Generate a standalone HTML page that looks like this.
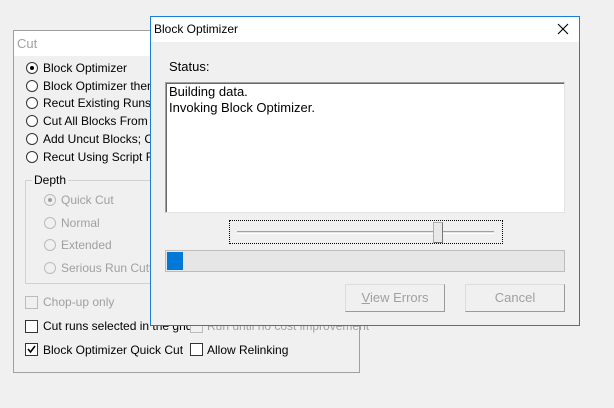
<!DOCTYPE html>
<html><head><meta charset="utf-8"><style>
*{margin:0;padding:0;box-sizing:border-box}
body{width:614px;height:408px;background:#f0f0f0;position:relative;overflow:hidden;font-family:"Liberation Sans",sans-serif;font-size:12px;color:#000}
.a{position:absolute;white-space:nowrap}
.rad{position:absolute;width:12px;height:12px;border-radius:50%;border:1px solid #333;background:#fff}
.rad.d{border-color:#bbb;background:#f0f0f0}
.dot{position:absolute;left:3px;top:3px;width:4px;height:4px;border-radius:50%;background:#000}
.cb{position:absolute;width:13px;height:13px;border:1px solid #333;background:#fff}
.cb.d{border-color:#bbb;background:#f0f0f0}
.g{color:#a0a0a0}
</style></head><body>
<!-- background window -->
<div class="a" style="left:13px;top:30px;width:347px;height:343px;border:1px solid #a0a0a0;background:#f0f0f0"></div>
<div class="a" style="left:14px;top:31px;width:345px;height:25px;background:#fff"></div>
<div class="a g" style="left:17px;top:36px;font-size:13px">Cut</div>

<div class="rad" style="left:26px;top:62px"><div class="dot"></div></div><div class="a" style="left:43px;top:61px">Block Optimizer</div>
<div class="rad" style="left:26px;top:80px"></div><div class="a" style="left:43px;top:79px">Block Optimizer then Run</div>
<div class="rad" style="left:26px;top:97px"></div><div class="a" style="left:43px;top:96px">Recut Existing Runs</div>
<div class="rad" style="left:26px;top:115px"></div><div class="a" style="left:43px;top:114px">Cut All Blocks From Scratch</div>
<div class="rad" style="left:26px;top:133px"></div><div class="a" style="left:43px;top:132px">Add Uncut Blocks; Cut</div>
<div class="rad" style="left:26px;top:151px"></div><div class="a" style="left:43px;top:150px">Recut Using Script File</div>

<div class="a" style="left:25px;top:180px;width:330px;height:104px;border:1px solid #d0d0d0"></div>
<div class="a" style="left:32px;top:173px;background:#f0f0f0;padding:0 2px">Depth</div>
<div class="rad d" style="left:44px;top:194px"><div class="dot" style="background:#a0a0a0"></div></div><div class="a g" style="left:61px;top:193px">Quick Cut</div>
<div class="rad d" style="left:44px;top:217px"></div><div class="a g" style="left:61px;top:216px">Normal</div>
<div class="rad d" style="left:44px;top:239px"></div><div class="a g" style="left:61px;top:238px">Extended</div>
<div class="rad d" style="left:44px;top:262px"></div><div class="a g" style="left:61px;top:261px">Serious Run Cutting</div>

<div class="cb d" style="left:25px;top:296px"></div><div class="a g" style="left:43px;top:295px">Chop-up only</div>
<div class="cb" style="left:25px;top:320px"></div><div class="a" style="left:43px;top:319px">Cut runs selected in the grid</div>
<div class="cb d" style="left:190px;top:320px"></div><div class="a g" style="left:207px;top:319px">Run until no cost improvement</div>
<div class="cb" style="left:25px;top:343px"><svg width="11" height="11" style="position:absolute;left:0;top:0"><path d="M2 5 L4.5 8 L9 2" stroke="#000" stroke-width="1.6" fill="none"/></svg></div><div class="a" style="left:43px;top:343px">Block Optimizer Quick Cut</div>
<div class="cb" style="left:190px;top:343px"></div><div class="a" style="left:207px;top:343px">Allow Relinking</div>

<!-- dialog -->
<div class="a" style="left:150px;top:16px;width:430px;height:310px;border:1px solid #1a7fd4;background:#f0f0f0"></div>
<div class="a" style="left:151px;top:17px;width:428px;height:25px;background:#fff"></div>
<div class="a" style="left:154px;top:22px">Block Optimizer</div>
<svg class="a" style="left:557px;top:23px" width="12" height="12"><path d="M1 1L11 11M11 1L1 11" stroke="#000" stroke-width="1.1"/></svg>
<div class="a" style="left:169px;top:59px;font-size:13px">Status:</div>
<div class="a" style="left:165px;top:82px;width:400px;height:131px;background:#fff;border:1px solid #a0a0a0;border-right-color:#e3e3e3;border-bottom-color:#e3e3e3;box-shadow:inset 1px 1px 0 #696969"></div>
<div class="a" style="left:169px;top:84px;font-size:13px;line-height:16px">Building data.<br>Invoking Block Optimizer.</div>
<div class="a" style="left:229px;top:220px;width:274px;height:24px;border:1px dotted #000"></div>
<div class="a" style="left:237px;top:231px;width:257px;height:3px;border-top:1px solid #a0a0a0;border-bottom:1px solid #fff;background:#e3e3e3"></div>
<div class="a" style="left:433px;top:222px;width:10px;height:21px;background:#e8e8e8;border:1px solid #b0b0b0;border-right-color:#777;border-bottom-color:#777"></div>
<div class="a" style="left:165px;top:250px;width:400px;height:22px;background:#e6e6e6;border:1px solid #bcbcbc"></div>
<div class="a" style="left:167px;top:252px;width:16px;height:18px;background:#0078d7"></div>
<div class="a g" style="left:345px;top:284px;width:100px;height:28px;border:1px solid #ddd;border-right-color:#999;border-bottom-color:#999;text-align:center;line-height:26px;font-size:13px"><u>V</u>iew Errors</div>
<div class="a g" style="left:465px;top:284px;width:100px;height:28px;border:1px solid #ddd;border-right-color:#999;border-bottom-color:#999;text-align:center;line-height:26px;font-size:13px">Cancel</div>
</body></html>
